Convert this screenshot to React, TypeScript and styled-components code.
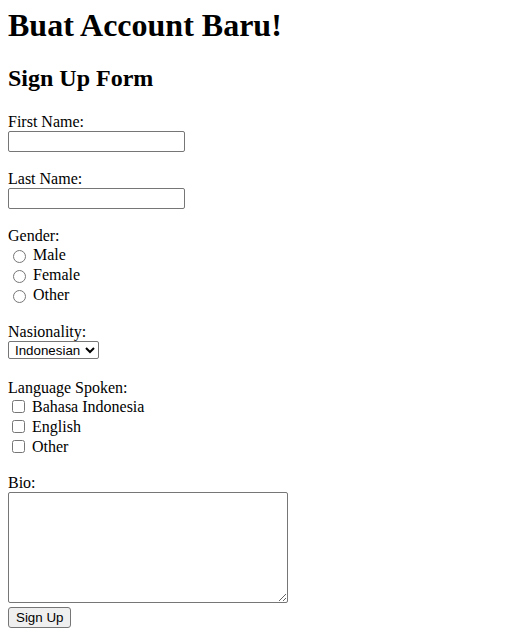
import styled, { createGlobalStyle } from "styled-components";

const GlobalStyle = createGlobalStyle`
  body {
    margin: 0 8px 8px;
    background: #fff;
    color: #000;
    font-family: "Liberation Serif", "Times New Roman", serif;
    font-size: 16px;
    line-height: 18.4px;
  }
`;

const Title = styled.h1`
  font-size: 32px;
  line-height: 36.8px;
  font-weight: bold;
  margin: 7px 0 21.4px;
`;

const SubTitle = styled.h2`
  font-size: 24px;
  line-height: 27.6px;
  font-weight: bold;
  margin: 0 0 20px;
`;

const Form = styled.form`
  display: flex;
  flex-direction: column;
  align-items: flex-start;
`;

const Field = styled.div<{ $gap?: number }>`
  display: flex;
  flex-direction: column;
  align-items: flex-start;
  margin-bottom: ${(p) => p.$gap ?? 17.6}px;
`;

const Label = styled.label`
  display: block;
  height: 18.4px;
`;

const TextInput = styled.input`
  box-sizing: border-box;
  width: 177px;
  height: 21px;
  margin: 0;
  padding: 1px 2px;
  border: 1px solid #767676;
  border-radius: 2px;
  font: 13.33px "Liberation Sans", Arial, sans-serif;
`;

const Option = styled.label`
  display: flex;
  align-items: center;
  height: 20px;
`;

const Radio = styled.input.attrs({ type: "radio" })`
  width: 13px;
  height: 13px;
  margin: 2px 7px 0 5px;
`;

const Check = styled.input.attrs({ type: "checkbox" })`
  width: 13px;
  height: 13px;
  margin: 0 7px 0 4px;
`;

const Select = styled.select`
  height: 18px;
  margin: 0;
  padding: 0 1px 0 2px;
  border: 1px solid #767676;
  border-radius: 2px;
  background: #fff;
  color: #000;
  font: 13.33px "Liberation Sans", Arial, sans-serif;
`;

const Bio = styled.textarea`
  box-sizing: border-box;
  width: 280px;
  height: 111px;
  margin: 0;
  padding: 2px;
  border: 1px solid #767676;
  border-radius: 2px;
  font: 13.33px "Liberation Mono", monospace;
`;

const Submit = styled.button`
  box-sizing: border-box;
  height: 21px;
  margin-top: 4px;
  padding: 1px 7px;
  background: #efefef;
  border: 1px solid #767676;
  border-radius: 3px;
  color: #000;
  font: 13.33px "Liberation Sans", Arial, sans-serif;
`;

const App = () => {
  return (
    <>
      <GlobalStyle />
      <Title>Buat Account Baru!</Title>
      <SubTitle>Sign Up Form</SubTitle>
      <Form onSubmit={(e) => e.preventDefault()}>
        <Field>
          <Label htmlFor="first">First Name:</Label>
          <TextInput id="first" type="text" />
        </Field>
        <Field>
          <Label htmlFor="last">Last Name:</Label>
          <TextInput id="last" type="text" />
        </Field>
        <Field>
          <Label>Gender:</Label>
          <Option>
            <Radio name="gender" value="male" />
            Male
          </Option>
          <Option>
            <Radio name="gender" value="female" />
            Female
          </Option>
          <Option>
            <Radio name="gender" value="other" />
            Other
          </Option>
        </Field>
        <Field $gap={19.4}>
          <Label htmlFor="nation">Nasionality:</Label>
          <Select id="nation" defaultValue="id">
            <option value="id">Indonesian</option>
            <option value="other">Other</option>
          </Select>
        </Field>
        <Field $gap={17.2}>
          <Label>Language Spoken:</Label>
          <Option>
            <Check value="id" />
            Bahasa Indonesia
          </Option>
          <Option>
            <Check value="en" />
            English
          </Option>
          <Option>
            <Check value="other" />
            Other
          </Option>
        </Field>
        <Field $gap={0}>
          <Label htmlFor="bio">Bio:</Label>
          <Bio id="bio" />
        </Field>
        <Submit type="submit">Sign Up</Submit>
      </Form>
    </>
  );
};

export default App;
